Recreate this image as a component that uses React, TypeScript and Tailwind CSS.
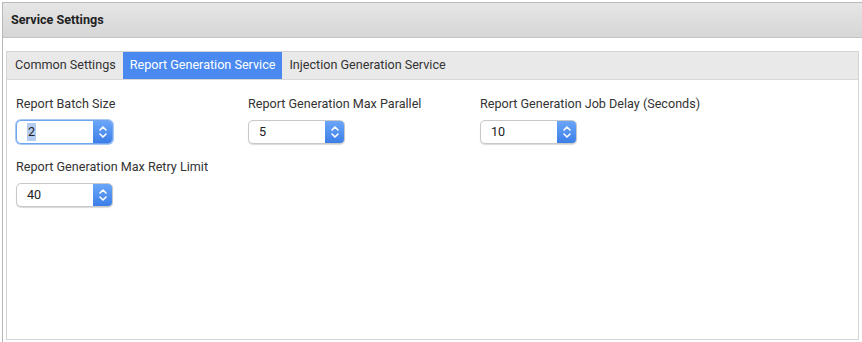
import React from "react"

type Field = { label: string; value: string; focused?: boolean }

const Spinner = ({ label, value, focused }: Field) => {
    return (
        <div className="flex flex-col gap-[9px]">
            <span className="text-[12.6px] leading-[14px] text-[#333]">{label}</span>
            <div
                className={`flex h-[24px] w-[97px] rounded-[5px] bg-white ${focused
                    ? "border border-[#6ea4f0] shadow-[0_0_0_1px_#a9c8f5]"
                    : "border border-[#c8c8c8] shadow-[0_1px_1px_rgba(0,0,0,0.15)]"}`}
            >
                <div className="flex flex-1 items-center pl-[10px] text-[12.6px] text-[#222]">
                    {focused ? <span className="bg-[#b4cdf0] px-[1px]">{value}</span> : value}
                </div>
                <div className="flex w-[19px] items-center justify-center rounded-r-[4px] bg-gradient-to-b from-[#6aa6f8] to-[#3c7ee8]">
                    <svg width="10" height="16" viewBox="0 0 10 16" fill="none" stroke="white" strokeWidth="1.6" strokeLinecap="round" strokeLinejoin="round">
                        <path d="M2 6 L5 3 L8 6" />
                        <path d="M2 10 L5 13 L8 10" />
                    </svg>
                </div>
            </div>
        </div>
    )
}

const tabs = ["Common Settings", "Report Generation Service", "Injection Generation Service"]

const App = () => {
    return (
        <div className="h-[342px] w-[862px] bg-white pl-[2px] pt-[2px] font-['Roboto',sans-serif]">
            <div className="flex h-[340px] flex-col border-l border-t border-[#b8b8b8]">
                <div className="flex h-[35px] items-center border-b border-[#c4c4c4] bg-gradient-to-b from-[#e6e6e6] to-[#d6d6d6] pl-[8px]">
                    <span className="text-[12.6px] font-bold text-[#222]">Service Settings</span>
                </div>
                <div className="flex flex-1 flex-col pl-[3px] pr-[3px] pt-[13px] pb-[2px]">
                    <div className="flex flex-1 flex-col border border-[#d4d4d4]">
                        <div className="flex h-[28px] border-b border-[#d8d8d8] bg-[#e9e9e9] pl-[1px]">
                            {tabs.map((t, i) => (
                                <div
                                    key={t}
                                    className={`flex items-center px-[7px] text-[12.6px] ${i === 1 ? "bg-[#4a8af0] text-white" : "text-[#333]"}`}
                                >
                                    {t}
                                </div>
                            ))}
                        </div>
                        <div className="grid grid-cols-[232px_232px_232px] gap-y-[16px] pl-[9px] pt-[17px]">
                            <Spinner label="Report Batch Size" value="2" focused />
                            <Spinner label="Report Generation Max Parallel" value="5" />
                            <Spinner label="Report Generation Job Delay (Seconds)" value="10" />
                            <Spinner label="Report Generation Max Retry Limit" value="40" />
                        </div>
                    </div>
                </div>
            </div>
        </div>
    )
}

export default App
